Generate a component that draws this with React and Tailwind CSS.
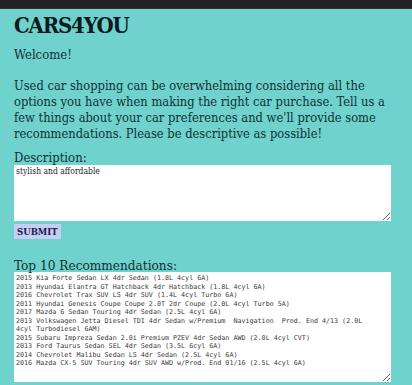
import { useState } from 'react';

const RECOMMENDATIONS = [
  '2015 Kia Forte Sedan LX 4dr Sedan (1.8L 4cyl 6A)',
  '2013 Hyundai Elantra GT Hatchback 4dr Hatchback (1.8L 4cyl 6A)',
  '2016 Chevrolet Trax SUV LS 4dr SUV (1.4L 4cyl Turbo 6A)',
  '2011 Hyundai Genesis Coupe Coupe 2.0T 2dr Coupe (2.0L 4cyl Turbo 5A)',
  '2017 Mazda 6 Sedan Touring 4dr Sedan (2.5L 4cyl 6A)',
  '2013 Volkswagen Jetta Diesel TDI 4dr Sedan w/Premium  Navigation  Prod. End 4/13 (2.0L 4cyl Turbodiesel 6AM)',
  '2015 Subaru Impreza Sedan 2.0i Premium PZEV 4dr Sedan AWD (2.0L 4cyl CVT)',
  '2013 Ford Taurus Sedan SEL 4dr Sedan (3.5L 6cyl 6A)',
  '2014 Chevrolet Malibu Sedan LS 4dr Sedan (2.5L 4cyl 6A)',
  '2016 Mazda CX-5 SUV Touring 4dr SUV AWD w/Prod. End 01/16 (2.5L 4cyl 6A)',
];

const serif = { fontFamily: '"DejaVu Serif Condensed", "DejaVu Serif", serif', fontStretch: 'condensed' };

export default function App() {
  const [description, setDescription] = useState('stylish and affordable');

  return (
    <div className="min-h-[385px] bg-[#6fd2cc]" style={serif}>
      {/* top bar */}
      <div className="h-[9px] bg-[#212024] border-b border-[#3a2c2e]" />

      <div className="pl-[14px] pr-[21px]">
        <h1 className="text-[22px] leading-[26px] font-bold tracking-[-1.2px] text-[#0b1a1c] mt-[3px]">
          CARS4YOU
        </h1>

        <p className="text-[13px] leading-[16px] text-[#123036] mt-[9px]">Welcome!</p>

        <p className="text-[12.8px] leading-[16px] text-[#123036] mt-[15px] -mr-[10px]">
          Used car shopping can be overwhelming considering all the options you have when making the
          right car purchase. Tell us a few things about your car preferences and we'll provide some
          recommendations. Please be descriptive as possible!
        </p>

        <label className="block text-[13px] leading-[15px] text-[#123036] mt-[8px]">
          Description:
        </label>
        <textarea
          value={description}
          onChange={(e) => setDescription(e.target.value)}
          className="block w-full h-[56px] bg-white text-[8.5px] leading-[11px] text-[#1e1e1e] px-[2px] py-[1px] outline-none resize-y"
          style={serif}
        />

        <button className="mt-[3px] block bg-[#c6cff3] text-[#13204a] text-[9.5px] font-bold px-[3px] py-[2px] leading-[11px]">
          SUBMIT
        </button>

        <p className="text-[13.5px] leading-[14px] text-[#123036] mt-[19px]">Top 10 Recommendations:</p>
        <div
          className="bg-white h-[110px] pl-[2px] pr-[16px] pt-[2px] text-[6.7px] leading-[8.5px] text-[#3a3a3a] whitespace-pre-wrap resize-y overflow-hidden"
          style={{ fontFamily: '"DejaVu Sans Mono", "Liberation Mono", monospace' }}
        >
          {RECOMMENDATIONS.map((r) => (
            <div key={r}>{r}</div>
          ))}
        </div>
      </div>
    </div>
  );
}
